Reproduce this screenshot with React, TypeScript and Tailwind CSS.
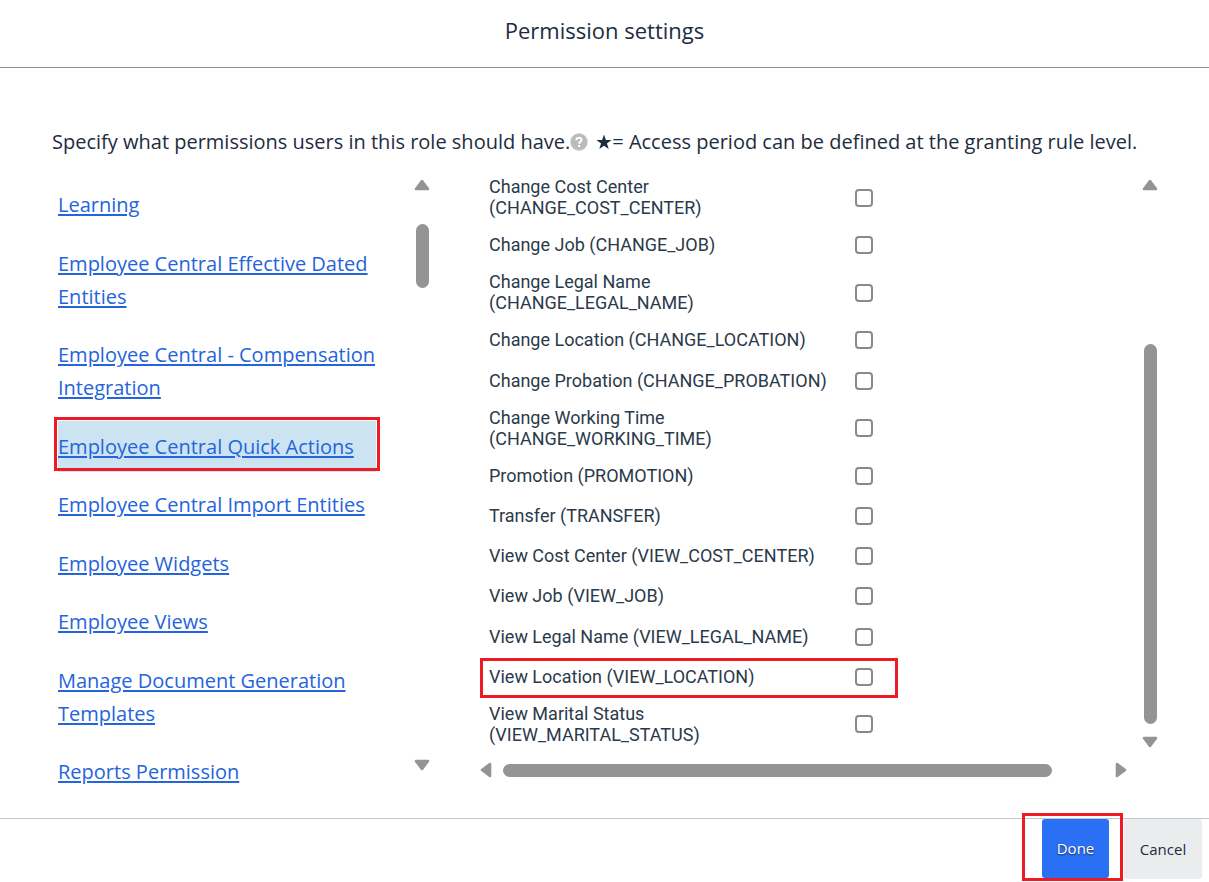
import { useState } from "react";

const categories = [
  "Learning",
  "Employee Central Effective Dated Entities",
  "Employee Central - Compensation Integration",
  "Employee Central Quick Actions",
  "Employee Central Import Entities",
  "Employee Widgets",
  "Employee Views",
  "Manage Document Generation Templates",
  "Reports Permission",
];

const permissions = [
  { name: "Change Cost Center", code: "CHANGE_COST_CENTER", wrap: true },
  { name: "Change Job", code: "CHANGE_JOB" },
  { name: "Change Legal Name", code: "CHANGE_LEGAL_NAME", wrap: true },
  { name: "Change Location", code: "CHANGE_LOCATION" },
  { name: "Change Probation", code: "CHANGE_PROBATION" },
  { name: "Change Working Time", code: "CHANGE_WORKING_TIME", wrap: true },
  { name: "Promotion", code: "PROMOTION" },
  { name: "Transfer", code: "TRANSFER" },
  { name: "View Cost Center", code: "VIEW_COST_CENTER" },
  { name: "View Job", code: "VIEW_JOB" },
  { name: "View Legal Name", code: "VIEW_LEGAL_NAME" },
  { name: "View Location", code: "VIEW_LOCATION", marked: true },
  { name: "View Marital Status", code: "VIEW_MARITAL_STATUS", wrap: true },
];

const rotations = {
  up: "",
  down: "rotate-180",
  left: "-rotate-90",
  right: "rotate-90",
};

function Arrow({ to, label }: { to: keyof typeof rotations; label: string }) {
  return (
    <button type="button" aria-label={label} className="flex size-4 shrink-0 items-center justify-center">
      <svg viewBox="0 0 16 16" className={`size-4 ${rotations[to]}`} aria-hidden="true">
        <path
          d="M8 4 L14 12 H2 Z"
          fill="#949494"
          stroke="#949494"
          strokeWidth="2.6"
          strokeLinejoin="round"
        />
      </svg>
    </button>
  );
}

function HelpIcon() {
  return (
    <svg viewBox="0 0 18 18" className="size-[18px]" aria-hidden="true">
      <circle cx="9" cy="9" r="9" fill="#d6d6d6" />
      <circle cx="9" cy="9" r="8" fill="#bababa" />
      <path
        d="M6.4 7.2 C6.4 4 11.6 4 11.6 7 C11.6 8.7 9.1 8.6 9.1 10.8"
        fill="none"
        stroke="#fff"
        strokeWidth="2"
      />
      <circle cx="9.1" cy="13" r="1.2" fill="#fff" />
    </svg>
  );
}

export default function App() {
  const [active, setActive] = useState("Employee Central Quick Actions");

  return (
    <div className="flex min-h-screen flex-col bg-white font-['Open_Sans',sans-serif] text-[#1d2d3e]">
      <header className="flex h-[68px] items-center justify-center border-b border-[#8d9299] pb-2">
        <h1 className="text-[22px] leading-8">Permission settings</h1>
      </header>

      <main className="flex-1 pr-[51px] pl-[52px] pt-[58px]">
        <p className="flex h-8 items-center whitespace-nowrap text-[20px] leading-8">
          Specify what permissions users in this role should have.
          <button type="button" aria-label="Help" className="mr-2">
            <HelpIcon />
          </button>
          <svg viewBox="0 0 18 18" className="size-4" aria-hidden="true">
            <path
              d="M9 0.5 L11.1 6.8 H17.5 L12.3 10.6 L14.3 17 L9 13.1 L3.7 17 L5.7 10.6 L0.5 6.8 H6.9 Z"
              fill="#1d2d3e"
            />
          </svg>
          = Access period can be defined at the granting rule level.
        </p>

        <div className="flex pt-[18px]">
          <nav aria-label="Permission categories" className="w-[324px] shrink-0 pt-[3px] pl-[6px]">
            <ul className="flex h-[618px] flex-col justify-between">
              {categories.map((name) => (
                <li
                  key={name}
                  className={`relative py-[9px] text-[20px] leading-[33px] ${
                    name === active ? "bg-[#cce4f1]" : ""
                  }`}
                >
                  <a
                    href="#"
                    onClick={() => setActive(name)}
                    className="text-[#2464dc] underline decoration-2 underline-offset-2"
                  >
                    {name}
                  </a>
                  {name === "Employee Central Quick Actions" && (
                    <span className="pointer-events-none absolute -inset-x-1 -top-1 bottom-px border-3 border-[#ed1c24]" />
                  )}
                </li>
              ))}
            </ul>
          </nav>

          <div className="ml-[38px] flex h-[597px] w-4 shrink-0 flex-col items-center pt-px">
            <Arrow to="up" label="Scroll categories up" />
            <div className="mt-[31px] h-16 w-[13px] rounded-full bg-[#949494]" />
            <div className="flex-1" />
            <Arrow to="down" label="Scroll categories down" />
          </div>

          <div className="ml-12 min-w-0 flex-1">
            <ul className="-mt-[6px] flex h-[582px] flex-col justify-between">
              {permissions.map((p) => (
                <li key={p.code} className="relative">
                  <label
                    className={`flex items-center pl-[11px] font-['Roboto',sans-serif] text-[18px] leading-[21px] text-[#2b3a4a] ${
                      p.wrap ? "h-[55px]" : "h-10"
                    }`}
                  >
                    <span className="w-[366px] whitespace-nowrap pb-px">
                      {p.name} {p.wrap && <br />}({p.code})
                    </span>
                    <input
                      type="checkbox"
                      className="size-[18px] appearance-none rounded-[4px] border-2 border-[#8a8a8a] bg-white checked:bg-[#2a6ff5]"
                    />
                  </label>
                  {p.marked && (
                    <span className="pointer-events-none absolute top-px -bottom-px left-[2px] w-[418px] border-3 border-[#ed1c24]" />
                  )}
                </li>
              ))}
            </ul>
            <div className="mt-[10px] flex h-4 items-center">
              <Arrow to="left" label="Scroll left" />
              <div className="ml-[9px] h-[13px] w-[549px] rounded-full bg-[#949494]" />
              <div className="flex-1" />
              <Arrow to="right" label="Scroll right" />
            </div>
          </div>

          <div className="ml-[13px] flex h-[574px] w-4 shrink-0 flex-col items-center pt-px">
            <Arrow to="up" label="Scroll permissions up" />
            <div className="flex-1" />
            <div className="mb-[10px] h-[380px] w-[13px] rounded-full bg-[#949494]" />
            <Arrow to="down" label="Scroll permissions down" />
          </div>
        </div>
      </main>

      <footer className="flex h-16 justify-end gap-[15px] border-t border-[#c4c6c8] pr-[7px] text-[15px]">
        <div className="relative">
          <button
            type="button"
            className="h-[59px] w-[67px] rounded-[3px] bg-[#2a70f5] text-white [text-shadow:0_1px_2px_#1d2d3e]"
          >
            Done
          </button>
          <span className="pointer-events-none absolute -top-[6px] -right-[14px] -left-5 h-[68px] border-3 border-[#ed1c24]" />
        </div>
        <button type="button" className="h-[60px] w-[78px] rounded-[3px] bg-[#eaecee]">
          Cancel
        </button>
      </footer>
    </div>
  );
}
